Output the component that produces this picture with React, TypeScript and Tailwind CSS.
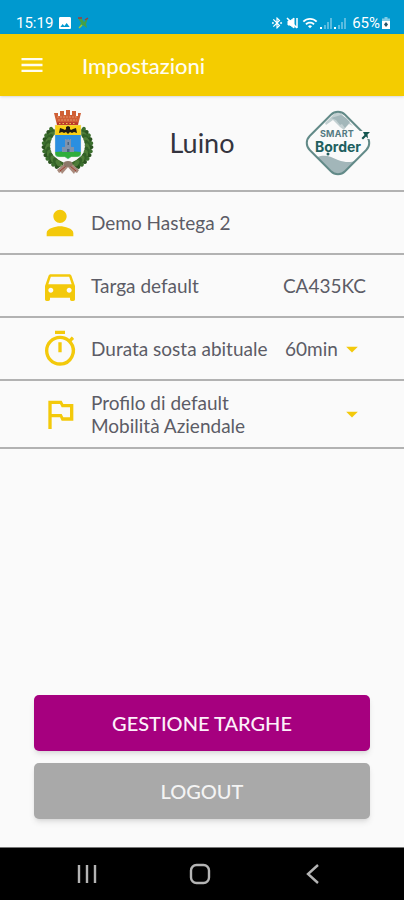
import type { ReactNode } from "react";
import {
  MdArrowDropDown,
  MdBluetoothConnected,
  MdDirectionsCar,
  MdImage,
  MdMenu,
  MdOutlineTimer,
  MdOutlinedFlag,
  MdPerson,
  MdWifi,
} from "react-icons/md";

const leafAngles = [-40, -30, -20, -10, 0, 10, 20, 30, 40, 50, 60, 70];

function Wreath() {
  return (
    <g>
      <path d="M11 22C1 32 3 48 22 56M42 22C52 32 50 48 31 56" fill="none" stroke="#3c6428" strokeWidth="5" />
      {[1, -1].map((side) =>
        leafAngles.map((deg, i) => {
          const a = (deg * Math.PI) / 180;
          const x = 26.5 + side * 20.5 * Math.cos(a);
          const y = 37 + 20 * Math.sin(a);
          const turn = side * (deg + 10);
          return (
            <g key={`${side}${deg}`} transform={`translate(${x} ${y}) rotate(${turn})`}>
              <ellipse cx={side * 2.8} cy="-1" rx="3.4" ry="2.2" transform={`rotate(${side * -38})`} fill={i % 2 ? "#2b5420" : "#3b6f2e"} />
              <ellipse cx={side * -2.6} cy="-1" rx="3.6" ry="2.2" transform={`rotate(${side * 42})`} fill={i % 2 ? "#4d7c38" : "#336227"} />
              <circle cx={side * 0.4} cy="1" r="0.8" fill={i % 3 ? "#80a45c" : "#a5522c"} />
            </g>
          );
        }),
      )}
    </g>
  );
}

function Crest() {
  return (
    <svg viewBox="0 0 54 68" className="h-[68px] w-[54px]" role="img" aria-label="Stemma di Luino">
      <Wreath />
      <path d="M23 55l-7 6 2 3 2-1 1 2 7-8zM31 55l7 6-2 3-2-1-1 2-7-8z" fill="#a88a7c" />
      <path d="M19 62l6-5M35 62l-6-5" stroke="#a13a2e" strokeWidth="1" />
      <ellipse cx="27" cy="55" rx="4.5" ry="3" fill="#8c7869" />
      <path d="M14 16h26v28c0 3-2 4-5 4h-5l-3 2-3-2h-5c-3 0-5-1-5-4z" fill="#2b8fe0" />
      <path d="M14 16h26v10H14z" fill="#f8cf16" />
      <path d="M14 43c8-1 18-1 26 0v1c0 3-2 4-5 4h-5l-3 2-3-2h-5c-3 0-5-1-5-4z" fill="#2fae3c" />
      <path d="M19 19l3 1 2 1 1-1v-2l2-1 2 1v2l1 1 2-1 3-1 1 5-3-1-2 1-2-1-1 1-1 1-1-1-1-1-2 1-2-1-3 1z" fill="#211d12" />
      <path d="M21 43v-5h3v-8h1.500v1h1v-1h1.500v1h1v-1H30v8h3v5z" fill="#8093ac" />
      <path d="M26 43v-3h2.500v3zM26.500 33h1.500v3h-1.500z" fill="#48637e" />
      <path d="M14 16h26v28c0 3-2 4-5 4h-5l-3 2-3-2h-5c-3 0-5-1-5-4z" fill="none" stroke="#d9e0cf" strokeWidth=".4" />
      <path d="M16 16L13 4h4v3h2V2h4v4h2V1h4v5h2V2h4v5h2V4h3l-3 12z" fill="#cf5f35" />
      <path d="M16 8h21M17 11h19" stroke="#eda780" strokeWidth=".7" strokeDasharray="2 1" />
      <path d="M16 14.500h21" stroke="#b9342a" strokeWidth="2.400" />
      <path d="M18 14.500h17" stroke="#efc54e" strokeWidth="1" strokeDasharray="1.500 2" />
    </svg>
  );
}

function SmartBorderLogo() {
  return (
    <svg viewBox="0 0 66 66" className="size-[66px]" role="img" aria-label="Smart Border">
      <defs>
        <clipPath id="badge">
          <rect x="8" y="8" width="50" height="50" rx="10" transform="rotate(45 33 33)" />
        </clipPath>
      </defs>
      <g clipPath="url(#badge)">
        <path d="M20 13L33 0l15 16-4-2-3 3-2 3-4-3-3-3-4-4-7 5z" fill="#c3d0d2" />
        <path d="M26 8l5 2 4 5 2-1 3 4 5-6-4-4-5-3z" fill="#a3b7ba" />
        <path d="M12 47c9-3 14 0 21 3 8 3 13 2 18 1L34 68z" fill="#a2b6b9" />
      </g>
      <rect x="8" y="8" width="50" height="50" rx="10" transform="rotate(45 33 33)" fill="none" stroke="#628a88" strokeWidth="2" />
      <path d="M53 21h13v8h-4l-3 1-6-3z" fill="#fafafa" />
      <path d="M58 22h7l-2.500 2.500.5 4-2-2-3 3-1.500-1.500 3-3z" fill="#145650" />
      <text x="32" y="27" textAnchor="middle" className="fill-[#557a82] font-['Inter',sans-serif] text-[9px] font-bold tracking-wide">SMART</text>
      <text x="33" y="42" textAnchor="middle" className="fill-[#215f5f] font-['Inter',sans-serif] text-[14px] font-bold">Border</text>
      <circle cx="23" cy="44" r="1.500" fill="#215f5f" />
    </svg>
  );
}

function Muted() {
  return (
    <svg viewBox="0 0 14 14" className="mx-0.5 size-[14px]" fill="none" stroke="#fff" aria-hidden="true">
      <path d="M2 5h2l4-3v10L4 9H2z" fill="#fff" />
      <path d="M1 2l10 10M11 2v10" strokeWidth="1.500" />
    </svg>
  );
}

function Signal() {
  return (
    <svg viewBox="0 0 14 12" className="h-3 w-[14px]" aria-hidden="true">
      <path d="M0 10h2v2H0z" fill="#fff" />
      <path d="M4 8h2v4H4zM7 5h2v7H7zM10 1h2v11h-2z" fill="#fff" opacity=".35" />
    </svg>
  );
}

function StatusBar() {
  return (
    <div className="flex h-[34px] items-end justify-between bg-[#0099cf] pr-[14px] pl-4 font-['Roboto',sans-serif] text-[15px] leading-[22px] text-white">
      <div className="flex items-center gap-1">
        <span>15:19</span>
        <MdImage className="size-4" />
        <svg viewBox="0 0 12 12" className="size-3" aria-hidden="true">
          <path d="M1 1l4 1 2 3 4-4-2 6 1 4-4-3-4 3 2-5z" fill="#43a047" />
          <path d="M1 1h4M8 3l3-2" stroke="#a33b3b" strokeWidth="1.500" />
          <path d="M2 11l3-3" stroke="#a2c83a" strokeWidth="1.500" />
        </svg>
      </div>
      <div className="flex items-center">
        <MdBluetoothConnected className="size-[14px]" />
        <Muted />
        <MdWifi className="mr-0.5 size-4" />
        <Signal />
        <Signal />
        <span className="ml-1">65%</span>
        <svg viewBox="0 0 8 12" className="ml-0.5 h-3 w-2" aria-hidden="true">
          <path d="M2.500 0h3v1.500H8V12H0V1.500h2.500z" fill="#fff" opacity=".5" />
          <path d="M0 4h8v8H0z" fill="#fff" />
          <path d="M4 5l2 2.500L4 10 2 7.500z" fill="#26546a" />
        </svg>
      </div>
    </div>
  );
}

function Row({ icon, children }: { icon: ReactNode; children: ReactNode }) {
  return (
    <li className="flex min-h-[63px] items-center gap-[11px] border-b-2 border-[#b2b2b2] pr-[38px] pl-10 text-[19px] leading-[23px] text-[#5c5c66]">
      <span className="shrink-0 text-[40px] text-[#f3c90b]">{icon}</span>
      {children}
    </li>
  );
}

const selectClass = "cursor-pointer appearance-none bg-transparent outline-none";

export default function App() {
  return (
    <div className="flex min-h-screen flex-col bg-[#fafafa] font-['Lato',sans-serif]">
      <StatusBar />
      <header className="z-10 flex h-[62px] items-center gap-9 bg-[#f4cc00] pl-[18px] text-[#fffdf0] shadow-sm">
        <button type="button" aria-label="Menu">
          <MdMenu className="size-7" />
        </button>
        <h1 className="text-[22px] font-medium">Impostazioni</h1>
      </header>
      <main className="flex flex-1 flex-col">
        <section className="flex h-24 items-center border-b-2 border-[#b2b2b2] pr-[33px] pl-[41px]">
          <Crest />
          <h2 className="flex-1 pl-1 text-center text-[27px] text-[#34343e]">Luino</h2>
          <SmartBorderLogo />
        </section>
        <ul>
          <Row icon={<MdPerson />}>
            <span>Demo Hastega 2</span>
          </Row>
          <Row icon={<MdDirectionsCar />}>
            <span className="flex-1">Targa default</span>
            <span>CA435KC</span>
          </Row>
          <Row icon={<MdOutlineTimer />}>
            <label htmlFor="durata" className="flex-1 whitespace-nowrap">
              Durata sosta abituale
            </label>
            <div className="relative">
              <select id="durata" className={`${selectClass} pr-7`} defaultValue="60">
                <option value="60">60min</option>
              </select>
              <MdArrowDropDown className="pointer-events-none absolute inset-y-0 right-0 my-auto size-7 text-[#f3c90b]" />
            </div>
          </Row>
          <Row icon={<MdOutlinedFlag />}>
            <div className="relative flex flex-1 flex-col py-[10px]">
              <label htmlFor="profilo">Profilo di default</label>
              <select id="profilo" className={`${selectClass} w-full pr-7`} defaultValue="aziendale">
                <option value="aziendale">Mobilità Aziendale</option>
              </select>
              <MdArrowDropDown className="pointer-events-none absolute inset-y-0 right-0 my-auto size-7 text-[#f3c90b]" />
            </div>
          </Row>
        </ul>
        <div className="mt-auto flex flex-col gap-3 px-[34px] pb-7">
          <button type="button" className="h-14 rounded-[5px] bg-[#a6007f] text-[20px] font-medium text-[#fdf0fa] shadow-md">
            GESTIONE TARGHE
          </button>
          <button type="button" className="h-14 rounded-[5px] bg-[#a9a9a9] text-[20px] font-medium text-[#f4f4f4] shadow-md">
            LOGOUT
          </button>
        </div>
      </main>
      <nav className="flex h-[53px] items-center justify-around border-t border-[#777777] bg-black pr-[34px] pl-[30px] text-[#b4b4b4]">
        <button type="button" aria-label="App recenti">
          <svg viewBox="0 0 24 24" className="size-6" fill="none" stroke="currentColor" strokeWidth="2.400">
            <path d="M4 3v18M12 3v18M20 3v18" />
          </svg>
        </button>
        <button type="button" aria-label="Home">
          <svg viewBox="0 0 24 24" className="size-6" fill="none" stroke="currentColor" strokeWidth="2.400">
            <rect x="3" y="3" width="18" height="18" rx="5.500" />
          </svg>
        </button>
        <button type="button" aria-label="Indietro">
          <svg viewBox="0 0 24 24" className="size-6" fill="none" stroke="currentColor" strokeWidth="2.400">
            <path d="M17 3L7 12l10 9" />
          </svg>
        </button>
      </nav>
    </div>
  );
}
